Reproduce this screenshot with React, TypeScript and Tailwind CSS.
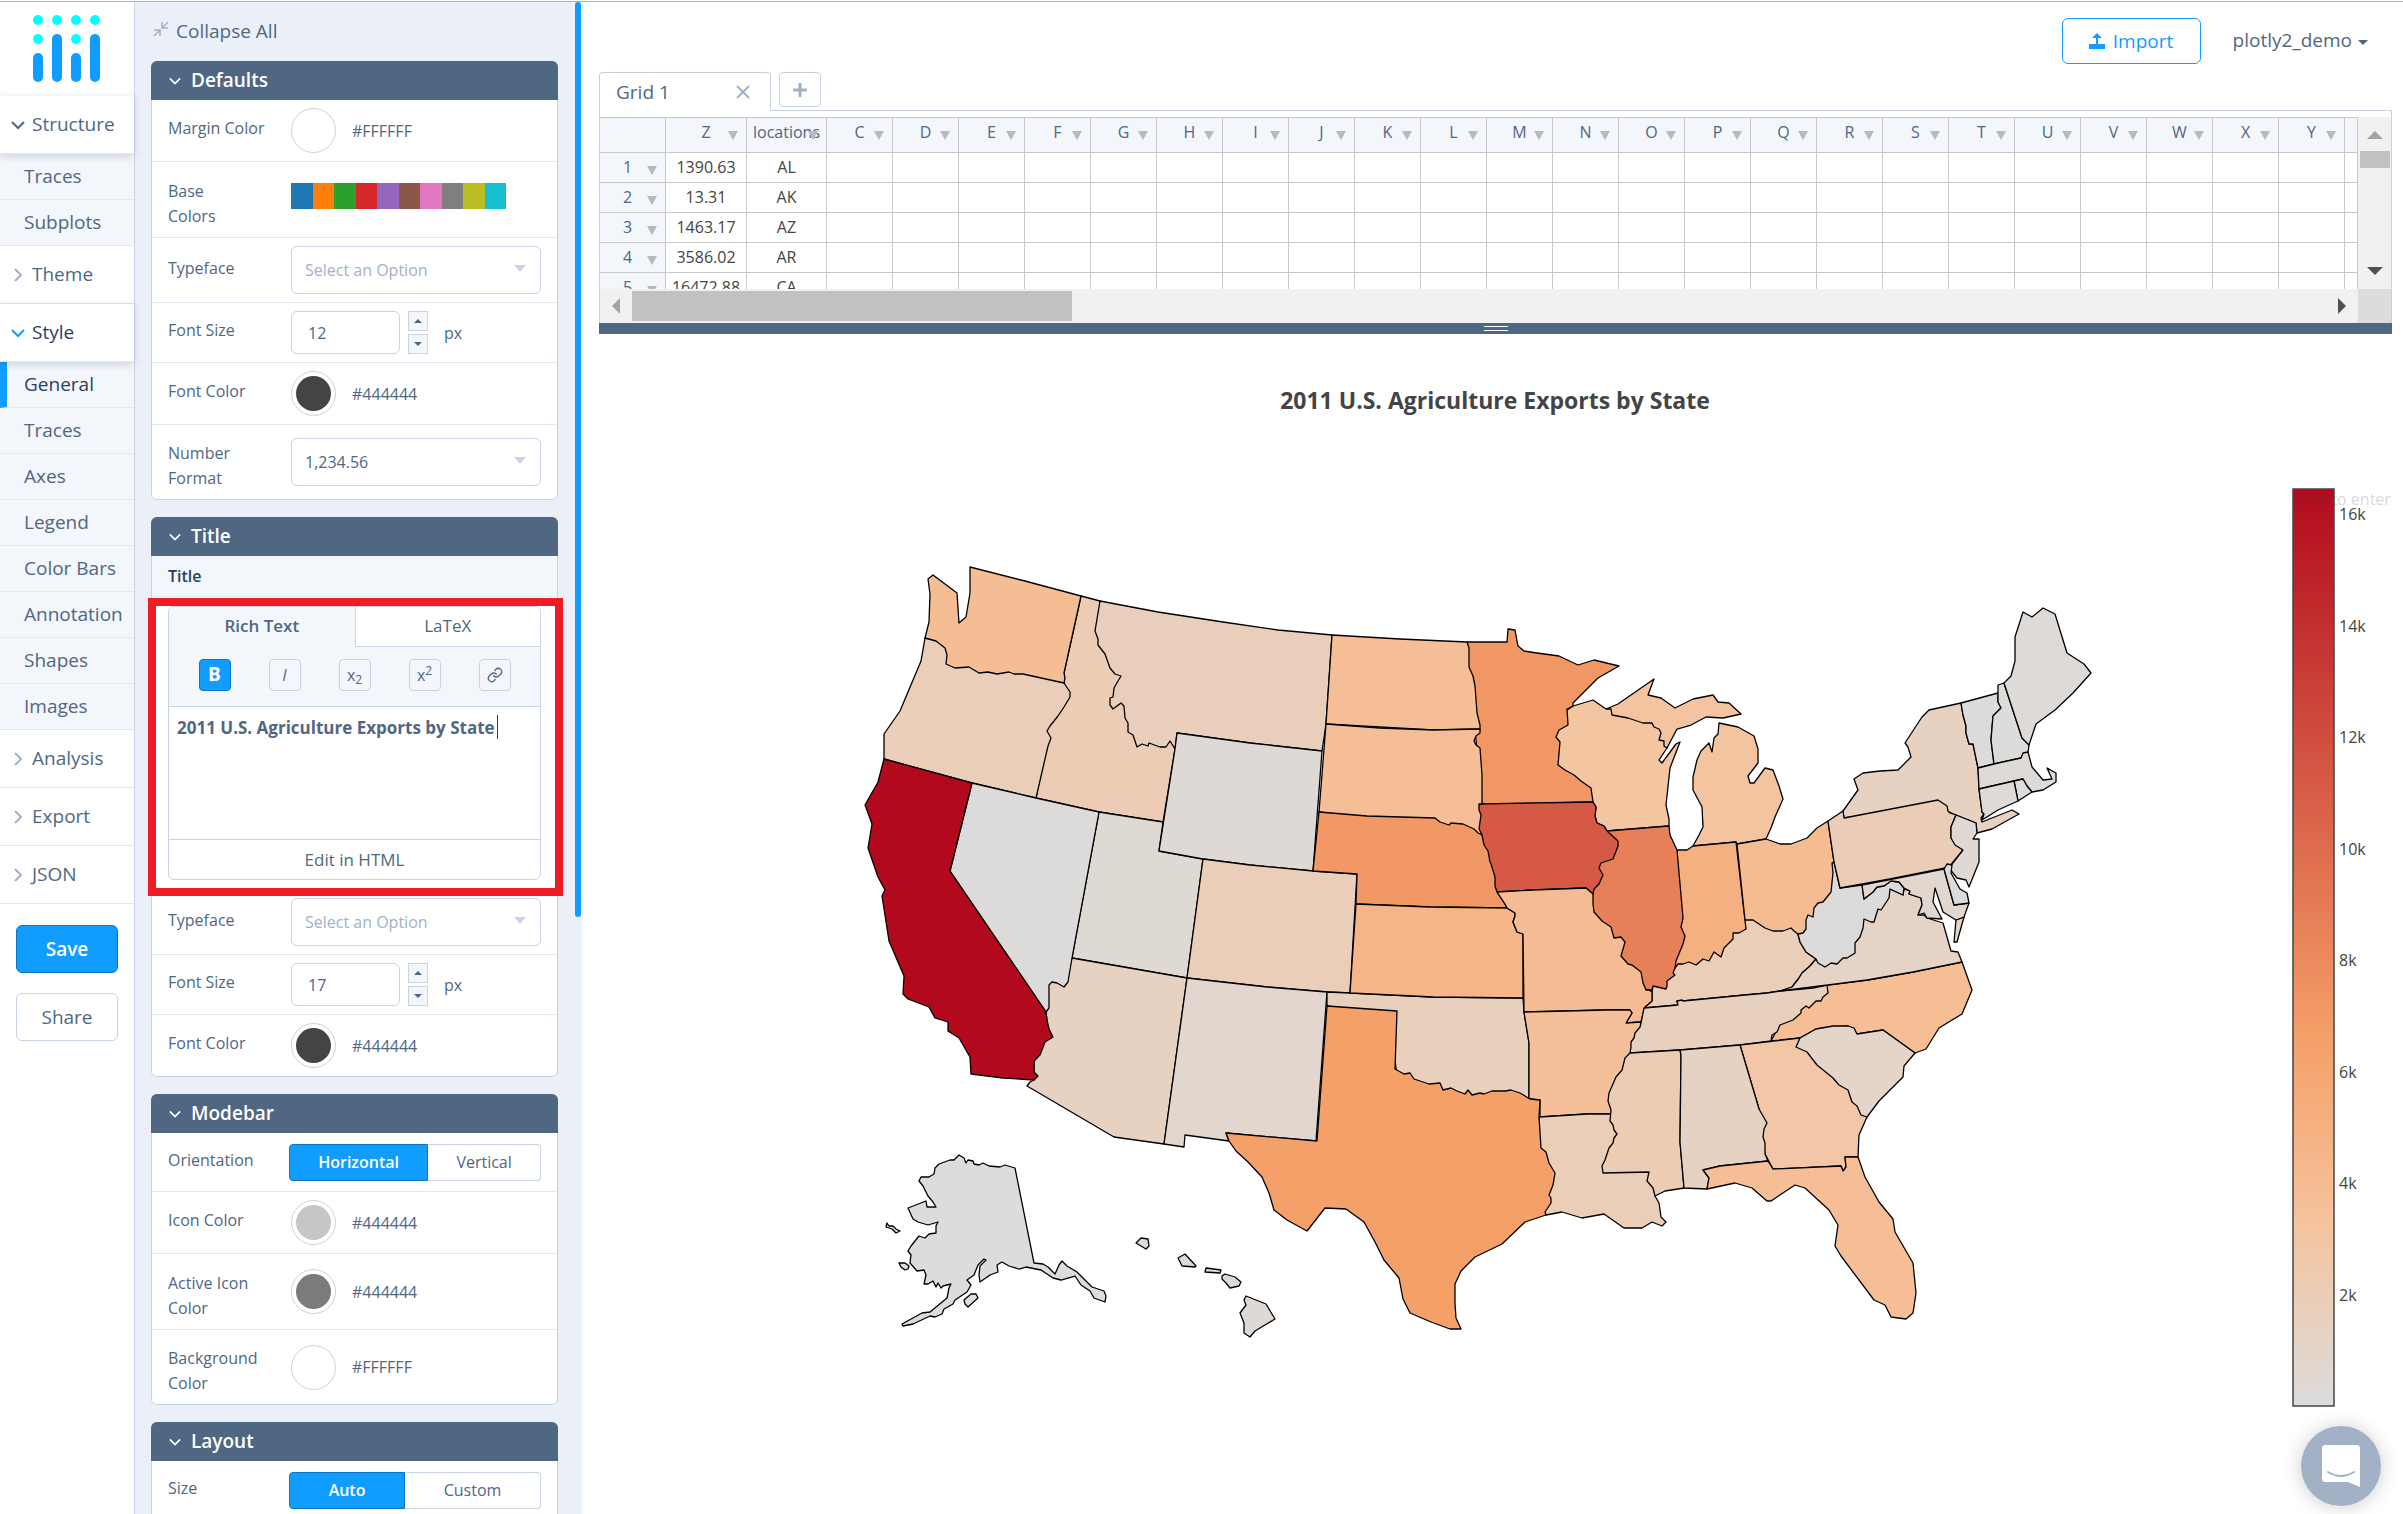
import React, { useState } from 'react';
import { Link as LinkIcon } from 'lucide-react';

type NavSection = { label: string; items?: string[] };

const SECTIONS: NavSection[] = [
  { label: 'Structure', items: ['Traces', 'Subplots'] },
  { label: 'Theme' },
  { label: 'Style', items: ['General', 'Traces', 'Axes', 'Legend', 'Color Bars', 'Annotation', 'Shapes', 'Images'] },
  { label: 'Analysis' },
  { label: 'Export' },
  { label: 'JSON' },
];

const PALETTE = ['#1f77b4', '#ff7f0e', '#2ca02c', '#d62728', '#9467bd', '#8c564b', '#e377c2', '#7f7f7f', '#bcbd22', '#17becf'];

const LETTERS = 'CDEFGHIJKLMNOPQRSTUVWXY'.split('');

const ROWS = [
  ['1390.63', 'AL'],
  ['13.31', 'AK'],
  ['1463.17', 'AZ'],
  ['3586.02', 'AR'],
  ['16472.88', 'CA'],
];

// [stop, r, g, b]
const SCALE = [
  [0, 220, 220, 220],
  [0.2, 245, 195, 157],
  [0.4, 245, 160, 105],
  [1, 178, 10, 28],
];
const Z_MIN = 13.31;
const Z_MAX = 16472.88;

function colorFor(z: number) {
  const t = (z - Z_MIN) / (Z_MAX - Z_MIN);
  let i = 1;
  while (i < SCALE.length - 1 && t > SCALE[i][0]) i++;
  const a = SCALE[i - 1];
  const b = SCALE[i];
  const k = (t - a[0]) / (b[0] - a[0]);
  const [r, g, bl] = [1, 2, 3].map((c) => Math.round(a[c] + (b[c] - a[c]) * k));
  return `rgb(${r},${g},${bl})`;
}

// Painted in order: a state only needs its exact border where nothing later covers it
const STATES: [string, number, string][] = [
  ['MT', 1718, 'M1100 601L1158 612L1223 622L1278 630L1332 635L1326 724L1322 751L1250 743L1177 733L1175 749L1168 760L1135 760L1100 710L1088 645Z'],
  ['ID', 2078.89, 'M1081 596L1100 601L1095 631L1098 639L1098 645L1105 654L1110 668L1115 674L1121 676L1114 688L1113 697L1110 698L1110 705L1113 709L1121 703L1124 706L1125 718L1128 723L1128 732L1133 735L1137 747L1142 744L1148 746L1149 743L1160 747L1166 747L1170 741L1175 749L1163 822L1099 812L1036 798L1046 746L1046 730L1060 690L1064 673Z'],
  ['OR', 1794.57, 'M925 638L921 661L900 711L884 734L884 759L972 783L1036 798L1048 746L1051 738L1047 731L1050 726L1058 716L1064 707L1070 697L1070 692L1064 683L1064 660Z'],
  ['WA', 3894.81, 'M970 567L1025 581L1081 596L1064 673L1065 678L1064 683L1023 674L1014 674L1009 672L997 674L988 672L979 673L969 667L955 668L946 664L947 655L945 648L936 641L925 638L929 622L930 594L928 579L933 575L957 593L959 623L966 617L970 593Z'],
  ['UT', 453.39, 'M1099 812L1163 822L1159 851L1203 859L1187 978L1072 958Z'],
  ['AZ', 1463.17, 'M1072 958L1187 978L1164 1144L1114 1137L1027 1086L1030 1082L1034 1080L1034 1062L1040 1050L1048 1030L1046 1012L1046 980L1068 970Z'],
  ['NV', 139.89, 'M972 783L1036 798L1099 812L1072 958L1068 982L1064 987L1057 983L1052 982L1049 985L1049 1008L1046 1012L950 871Z'],
  ['CA', 16472.88, 'M884 759L972 783L950 871L1046 1012L1047 1020L1049 1029L1053 1037L1045 1042L1040 1055L1034 1061L1034 1072L1038 1076L1034 1080L1003 1078L971 1074L970 1057L959 1038L948 1031L948 1022L935 1018L929 1007L908 999L903 994L904 976L889 941L882 896L885 890L878 877L868 848L872 824L865 805L878 782Z'],
  ['WY', 349.69, 'M1177 733L1250 743L1322 751L1313 871L1250 865L1203 859L1159 851L1175 749Z'],
  ['CO', 1851.33, 'M1203 859L1250 865L1313 871L1357 874L1350 993L1327 992L1267 987L1187 978Z'],
  ['NM', 751.58, 'M1187 978L1267 987L1327 992L1316 1141L1226 1133L1229 1141L1185 1135L1184 1147L1164 1144Z'],
  ['MI', 3164.16, 'M1719 723L1738 727L1754 736L1758 749L1758 763L1748 776L1750 783L1754 783L1765 768L1773 770L1779 786L1783 799L1775 817L1771 828L1766 839L1737 844L1736 842L1693 846L1699 835L1703 827L1702 807L1693 790L1693 777L1697 760L1701 751L1709 743L1712 752L1714 738L1718 734ZM1606 709L1618 704L1654 679L1648 695L1661 698L1675 708L1693 699L1713 695L1718 702L1729 703L1741 714L1723 718L1706 717L1691 725L1677 729L1667 748L1650 740L1630 730L1608 715Z'],
  ['WI', 3090.23, 'M1573 706L1593 700L1606 709L1611 709L1612 715L1628 718L1643 723L1652 723L1654 727L1659 729L1661 733L1659 740L1664 741L1664 746L1667 748L1659 760L1662 763L1676 744L1680 742L1670 768L1666 805L1669 819L1669 826L1607 831L1604 826L1597 823L1595 816L1596 807L1593 802L1580 790L1550 760L1550 735L1560 715Z'],
  ['MN', 7192.33, 'M1467 642L1507 642L1508 629L1515 630L1518 646L1524 651L1537 653L1559 656L1578 665L1594 660L1619 666L1598 678L1573 703L1573 706L1567 709L1568 725L1559 730L1556 737L1560 742L1558 765L1565 770L1574 775L1581 781L1591 788L1593 802L1550 803L1482 804L1476 740L1470 700L1467 660Z'],
  ['KY', 1889.15, 'M1745 915L1795 920L1798 934L1800 942L1806 952L1816 959L1810 966L1802 973L1799 978L1792 987L1780 991L1767 993L1745 995L1683 1001L1677 1001L1678 1005L1644 1008L1652 1001L1652 992L1653 986L1660 975L1680 950L1725 925Z'],
  ['IN', 5050.23, 'M1677 850L1687 850L1693 846L1736 842L1745 920L1746 929L1739 933L1733 933L1733 939L1729 943L1724 948L1721 957L1714 952L1709 961L1703 959L1696 965L1689 962L1683 964L1678 964L1675 968L1674 950L1674 920Z'],
  ['IL', 8709.48, 'M1607 831L1669 826L1670 835L1677 850L1683 918L1681 927L1685 936L1683 944L1676 961L1675 968L1673 973L1675 975L1667 981L1667 986L1666 989L1653 986L1652 990L1646 990L1638 978L1615 950L1590 915L1590 890L1598 870L1600 850Z'],
  ['IA', 11273.76, 'M1479 804L1593 802L1596 807L1595 816L1597 823L1604 826L1607 831L1618 841L1618 846L1613 859L1601 863L1599 868L1603 875L1599 884L1594 889L1593 894L1586 888L1533 890L1497 892L1488 870L1480 850L1475 820Z'],
  ['ND', 3761.96, 'M1332 635L1400 639L1467 642L1469 648L1469 667L1473 676L1475 686L1477 713L1480 725L1480 729L1433 730L1326 724Z'],
  ['SD', 3770.19, 'M1326 724L1380 728L1433 730L1480 729L1480 733L1476 736L1474 741L1476 745L1480 748L1482 775L1482 804L1479 804L1479 810L1481 815L1479 829L1482 835L1450 830L1319 812Z'],
  ['NE', 7114.13, 'M1319 812L1367 816L1435 818L1440 822L1449 825L1451 823L1463 824L1474 829L1478 833L1482 835L1484 845L1488 851L1490 862L1491 864L1495 877L1495 886L1497 892L1505 904L1507 908L1430 907L1356 904L1357 874L1313 871Z'],
  ['OK', 1646.41, 'M1327 992L1350 993L1433 997L1523 998L1524 1012L1529 1043L1529 1098L1500 1110L1400 1100L1390 1020L1327 1006Z'],
  ['KS', 4589.01, 'M1356 904L1430 907L1507 908L1515 913L1515 916L1513 922L1517 932L1523 934L1523 998L1433 997L1350 993Z'],
  ['MO', 3933.42, 'M1497 892L1533 890L1586 888L1593 894L1593 904L1594 912L1602 921L1611 927L1614 938L1621 937L1625 942L1621 956L1628 964L1632 965L1641 972L1643 983L1646 990L1649 990L1652 992L1652 1001L1645 1007L1641 1022L1626 1023L1632 1013L1630 1010L1605 1010L1567 1011L1524 1012L1523 934L1517 932L1513 922L1515 916L1515 913L1507 908L1505 904Z'],
  ['AR', 3586.02, 'M1524 1012L1567 1011L1605 1010L1630 1010L1632 1013L1626 1023L1641 1022L1640 1045L1625 1090L1615 1110L1611 1114L1587 1114L1540 1117L1540 1100L1530 1099L1529 1098L1529 1043Z'],
  ['LA', 1914.23, 'M1539 1117L1587 1114L1611 1114L1620 1130L1615 1165L1652 1165L1655 1196L1659 1203L1661 1217L1666 1222L1662 1226L1652 1222L1642 1228L1624 1228L1604 1214L1582 1218L1562 1212L1546 1215L1535 1190Z'],
  ['TX', 6648.22, 'M1327 1006L1397 1011L1395 1069L1404 1074L1410 1073L1414 1079L1429 1084L1440 1083L1443 1090L1451 1088L1457 1091L1465 1094L1468 1090L1472 1095L1480 1093L1484 1094L1492 1091L1505 1091L1511 1090L1520 1093L1530 1099L1540 1100L1539 1117L1541 1148L1546 1152L1549 1163L1555 1173L1553 1185L1549 1195L1551 1198L1551 1203L1545 1212L1546 1215L1525 1222L1502 1244L1475 1257L1461 1271L1455 1284L1455 1303L1456 1318L1461 1329L1450 1329L1431 1322L1410 1313L1403 1299L1399 1278L1384 1260L1375 1242L1364 1222L1346 1209L1325 1208L1307 1231L1287 1220L1274 1210L1269 1193L1262 1177L1248 1162L1236 1151L1229 1141L1226 1133L1317 1141Z'],
  ['NC', 3806.05, 'M1827 985L1868 980L1913 972L1962 962L1972 990L1962 1014L1939 1028L1926 1049L1915 1053L1883 1030L1857 1034L1848 1026L1816 1029L1800 1038L1771 1041L1785 1015Z'],
  ['TN', 1535.13, 'M1630 1053L1631 1047L1631 1042L1634 1038L1635 1033L1640 1027L1641 1023L1644 1008L1678 1005L1677 1001L1682 1000L1683 1001L1745 995L1767 993L1780 991L1813 988L1827 985L1828 993L1823 997L1821 1001L1816 1001L1809 1008L1806 1006L1801 1010L1801 1013L1793 1020L1780 1025L1777 1032L1772 1035L1771 1041L1740 1045L1680 1050Z'],
  ['MS', 2170.8, 'M1630 1053L1680 1050L1681 1055L1680 1142L1684 1188L1665 1191L1655 1196L1653 1188L1647 1181L1649 1172L1603 1173L1602 1166L1605 1160L1609 1148L1613 1143L1614 1138L1617 1134L1614 1130L1613 1125L1610 1121L1611 1110L1608 1101L1609 1093L1616 1077L1622 1070L1625 1058Z'],
  ['GA', 2860.84, 'M1740 1045L1800 1038L1830 1060L1867 1110L1867 1117L1859 1135L1858 1157L1845 1157L1846 1167L1843 1171L1841 1166L1773 1169L1765 1154L1759 1109Z'],
  ['AL', 1390.63, 'M1680 1050L1740 1045L1759 1109L1767 1123L1764 1129L1763 1137L1765 1143L1765 1154L1768 1161L1720 1166L1703 1170L1709 1178L1707 1189L1684 1188L1680 1142L1681 1055Z'],
  ['FL', 3764.09, 'M1703 1170L1720 1166L1768 1161L1773 1169L1841 1166L1843 1171L1846 1167L1845 1157L1858 1157L1865 1177L1879 1202L1893 1219L1895 1232L1913 1263L1916 1293L1913 1313L1906 1319L1891 1317L1885 1305L1874 1300L1841 1256L1835 1246L1838 1225L1829 1210L1805 1188L1795 1185L1771 1201L1767 1201L1752 1188L1735 1183L1707 1189L1709 1178Z'],
  ['SC', 929.93, 'M1800 1038L1816 1029L1833 1026L1848 1026L1854 1028L1857 1034L1883 1030L1915 1053L1904 1066L1903 1077L1879 1101L1867 1117L1861 1115L1857 1106L1852 1102L1848 1090L1839 1085L1833 1078L1817 1065L1807 1052L1796 1047Z'],
  ['VA', 1146.48, 'M1780 991L1792 987L1799 978L1802 973L1810 966L1816 959L1850 935L1880 895L1890 889L1903 895L1904 889L1910 891L1909 894L1921 898L1922 905L1918 915L1924 915L1927 918L1943 923L1951 951L1958 952L1962 962L1913 972L1867 980L1828 985ZM1956 920L1964 917L1957 942L1954 942Z'],
  ['WV', 138.89, 'M1834 862L1840 888L1862 885L1864 899L1873 892L1877 887L1884 886L1891 881L1899 882L1904 888L1903 895L1890 889L1889 898L1881 910L1878 909L1874 922L1871 922L1864 919L1863 928L1860 937L1855 943L1855 953L1847 958L1843 958L1837 964L1831 963L1825 967L1818 963L1816 959L1806 952L1800 942L1798 934L1800 925L1822 895L1832 863Z'],
  ['OH', 3979.79, 'M1737 844L1766 839L1780 844L1791 844L1807 838L1817 828L1828 821L1834 862L1832 863L1833 873L1831 892L1823 902L1818 903L1814 908L1813 917L1808 915L1806 920L1806 929L1803 933L1798 934L1794 931L1791 928L1783 931L1773 931L1765 928L1753 920L1745 920Z'],
  ['NY', 1488.9, 'M1843 811L1858 790L1854 779L1863 773L1880 771L1898 770L1911 757L1908 747L1905 743L1922 717L1929 710L1961 703L1963 715L1966 726L1966 733L1969 744L1973 744L1978 768L1979 789L1982 812L1984 814L1981 818L1982 822L2012 810L2019 814L1992 829L1977 833L1976 823L1956 815L1940 808L1844 818Z'],
  ['PA', 1969.87, 'M1828 821L1843 811L1844 818L1938 800L1947 806L1948 811L1950 813L1956 815L1951 827L1951 838L1963 850L1949 867L1945 868L1890 879L1840 888L1834 862Z'],
  ['NJ', 500.4, 'M1956 815L1976 823L1977 833L1973 839L1979 839L1979 862L1969 887L1966 880L1957 878L1949 868L1963 850L1955 845L1951 838L1951 827Z'],
  ['MD', 692.75, 'M1862 885L1944 869L1954 905L1969 903L1964 917L1956 920L1943 912L1935 888L1933 902L1942 919L1927 918L1924 913L1918 915L1922 905L1921 898L1909 894L1910 891L1904 888L1899 882L1891 881L1884 886L1877 887L1873 892L1864 899Z'],
  ['DE', 282.19, 'M1944 869L1947 864L1952 865L1951 873L1960 889L1967 893L1969 903L1954 905Z'],
  ['VT', 180.14, 'M1961 703L1998 693L1998 702L2001 708L1993 716L1991 740L1994 764L1978 768L1973 744L1969 744L1966 733L1966 726L1963 715Z'],
  ['NH', 73.06, 'M1998 693L1998 685L2004 683L2022 738L2029 745L2028 752L2021 758L1994 764L1991 740L1993 716L2001 708L1998 702Z'],
  ['ME', 278.37, 'M2004 683L2011 676L2015 661L2015 637L2023 612L2032 617L2043 608L2055 614L2067 653L2084 664L2091 673L2073 693L2055 710L2036 724L2029 745L2022 738Z'],
  ['MA', 248.65, 'M1978 768L1994 764L2021 758L2023 753L2028 752L2032 767L2043 780L2052 779L2047 768L2056 773L2056 782L2043 790L2032 792L2027 786L2023 779L1979 789Z'],
  ['RI', 31.59, 'M2014 781L2023 779L2027 786L2032 792L2018 801Z'],
  ['CT', 259.62, 'M1979 789L2014 781L2018 801L1998 810L1982 820L1984 814L1982 812Z'],
  ['AK', 13.31, 'M959 1155L964 1158L966 1163L968 1160L973 1161L974 1164L979 1165L983 1163L989 1166L1000 1167L1005 1165L1015 1168L1034 1263L1043 1264L1048 1267L1055 1274L1059 1265L1062 1261L1067 1266L1077 1272L1092 1287L1104 1291L1106 1296L1105 1302L1094 1298L1090 1291L1081 1285L1075 1276L1061 1280L1053 1278L1041 1270L1026 1267L1019 1269L1009 1266L1002 1262L997 1265L998 1272L990 1275L980 1282L979 1275L980 1266L986 1260L984 1259L978 1265L974 1275L967 1280L971 1285L967 1292L955 1300L953 1304L944 1309L942 1314L935 1317L930 1316L913 1324L903 1326L902 1324L922 1313L930 1312L947 1298L949 1288L951 1284L943 1286L941 1288L938 1283L936 1287L933 1281L928 1284L924 1284L926 1275L924 1270L917 1271L910 1263L911 1255L908 1251L911 1246L919 1236L925 1238L929 1234L936 1233L936 1226L938 1222L928 1225L918 1222L913 1219L908 1208L926 1201L927 1207L936 1207L933 1202L928 1196L923 1186L919 1181L921 1177L929 1177L934 1174L935 1168L939 1164L950 1160L954 1160ZM887 1223L889 1226L893 1226L896 1229L900 1231L896 1233L892 1229L886 1227ZM899 1263L905 1263L909 1266L908 1269L905 1270L901 1267ZM964 1300L971 1294L976 1294L978 1298L968 1307L965 1304Z'],
  ['HI', 401.84, 'M1136 1243L1141 1238L1148 1239L1149 1246L1146 1249ZM1178 1258L1185 1254L1196 1266L1195 1267L1182 1266ZM1206 1268L1221 1270L1220 1273L1205 1272ZM1222 1276L1225 1274L1235 1277L1241 1282L1239 1286L1230 1288L1226 1283L1222 1279ZM1246 1296L1266 1304L1275 1319L1255 1331L1250 1337L1244 1333L1244 1323L1240 1313L1246 1305L1244 1300Z'],
];

function Chevron({ open, className }: { open: boolean; className: string }) {
  return (
    <svg className={className} width="14" height="14" viewBox="0 0 14 14" fill="none" stroke="currentColor" strokeWidth="2">
      <path d={open ? 'M1 4l6 6 6-6' : 'M4 1l6 6-6 6'} />
    </svg>
  );
}

function Logo() {
  return (
    <svg className="mx-auto" width="68" height="68" viewBox="0 0 68 68">
      <g fill="#0ff">
        {[5, 24, 43, 62].map((x) => <circle key={x} cx={x} cy="5" r="5" />)}
        <circle cx="5" cy="24" r="5" />
        <circle cx="43" cy="24" r="5" />
      </g>
      <g fill="#119dff">
        <rect x="0" y="38" width="10" height="29" rx="5" />
        <rect x="19" y="19" width="10" height="48" rx="5" />
        <rect x="38" y="38" width="10" height="29" rx="5" />
        <rect x="57" y="19" width="10" height="48" rx="5" />
      </g>
    </svg>
  );
}

function SideNav() {
  const [active, setActive] = useState('Style/General');
  return (
    <nav className="w-[135px] shrink-0 border-r border-[#c8d4e3] bg-white text-[19px]">
      <div className="h-[94px] pt-[13px]">
        <Logo />
      </div>
      {SECTIONS.map((s) => (
        <div key={s.label}>
          <button
            className={
              'relative flex h-[58px] w-full items-center gap-[7px] border-b border-[#dfe8f3] pl-[11px] ' +
              (s.items ? 'shadow-[0_2px_8px_rgba(42,63,95,0.2)] ' : '') +
              (s.label === 'Style' ? 'font-medium text-[#2a3f5f]' : '')
            }
          >
            <Chevron
              open={!!s.items}
              className={s.label === 'Style' ? 'text-[#119dff]' : s.items ? 'text-[#506784]' : 'text-[#a2b1c6]'}
            />
            {s.label}
          </button>
          {s.items?.map((item) => {
            const id = s.label + '/' + item;
            return (
              <a
                key={id}
                href="#"
                onClick={() => setActive(id)}
                className={
                  'flex h-[46px] items-center whitespace-nowrap border-b border-[#dfe8f3] bg-[#f3f6fa] ' +
                  (active === id ? 'border-l-[7px] border-l-[#119dff] pl-[17px] font-medium text-[#2a3f5f]' : 'pl-6')
                }
              >
                {item}
              </a>
            );
          })}
        </div>
      ))}
      <div className="flex flex-col gap-5 px-4 pt-[21px] font-medium">
        <button className="h-12 rounded-md border border-[#0d76bf] bg-[#119dff] font-semibold text-white">Save</button>
        <button className="h-12 rounded-md border border-[#c8d4e3] bg-white">Share</button>
      </div>
    </nav>
  );
}

function Card({ title, children }: { title: string; children: React.ReactNode }) {
  return (
    <section className="mb-[17px] rounded-md border border-[#c8d4e3] bg-white">
      <h2 className="-mx-px -mt-px flex h-[39px] items-center gap-2.5 rounded-t-md bg-[#506784] pl-[18px] text-[19px] font-semibold text-white">
        <Chevron open className="w-3" />
        {title}
      </h2>
      {children}
    </section>
  );
}

function Row({ label, id, two, children }: { label: string; id?: string; two?: boolean; children: React.ReactNode }) {
  return (
    <div
      className={
        'flex items-center border-b border-[#dfe8f3] pl-4 pr-4 last:border-b-0 ' +
        (two ? 'min-h-[76px] last:min-h-[74px]' : 'py-2')
      }
    >
      <label htmlFor={id} className={'w-[123px] leading-[25px] ' + (two ? 'pr-10 pt-2' : 'whitespace-nowrap pb-1')}>
        {label}
      </label>
      {children}
    </div>
  );
}

function ColorField({ id, color, hex }: { id: string; color: string; hex: string }) {
  return (
    <>
      <button id={id} className="size-[45px] rounded-full border border-[#c8d4e3] p-1">
        <span className="block size-full rounded-full" style={{ backgroundColor: color }} />
      </button>
      <span className="ml-4 font-medium">{hex}</span>
    </>
  );
}

function SelectField({ id, value, muted }: { id: string; value: string; muted?: boolean }) {
  return (
    <div className="relative flex-1">
      <select
        id={id}
        className={
          'h-12 w-full appearance-none rounded-md border border-[#c8d4e3] bg-white pl-[13px] pr-8 ' +
          (muted ? 'text-[#a2b1c6]' : '')
        }
      >
        <option>{value}</option>
      </select>
      <span className="pointer-events-none absolute right-[15px] top-[19px] border-x-[6px] border-t-[7px] border-x-transparent border-t-[#c8d4e3]" />
    </div>
  );
}

function SizeField({ id, value }: { id: string; value: string }) {
  return (
    <>
      <input id={id} defaultValue={value} className="h-[43px] w-[109px] rounded-md border border-[#c8d4e3] pl-4" />
      <div className="ml-2 flex flex-col gap-[3px]">
        <button aria-label="Increase" className="flex h-[20px] w-5 items-center justify-center border border-[#c8d4e3] bg-[#f3f6fa]">
          <span className="border-x-4 border-b-4 border-x-transparent border-b-[#506784]" />
        </button>
        <button aria-label="Decrease" className="flex h-[20px] w-5 items-center justify-center border border-[#c8d4e3] bg-[#f3f6fa]">
          <span className="border-x-4 border-t-4 border-x-transparent border-t-[#506784]" />
        </button>
      </div>
      <span className="ml-4">px</span>
    </>
  );
}

function Segmented({ options }: { options: string[] }) {
  const [value, setValue] = useState(options[0]);
  return (
    <div className="-ml-0.5 flex h-[37px] flex-1">
      {options.map((o) => (
        <button
          key={o}
          onClick={() => setValue(o)}
          className={
            'grow border px-6 first:rounded-l last:rounded-r ' +
            (o === value ? 'border-[#0d76bf] bg-[#119dff] font-semibold text-white' : 'border-l-0 border-[#c8d4e3] bg-white')
          }
        >
          {o}
        </button>
      ))}
    </div>
  );
}

function RichText() {
  const tool = 'flex size-8 items-center justify-center rounded border border-[#c8d4e3] text-base';
  return (
    <div className="relative px-4 pb-2.5 pt-[9px] text-[17px]">
      <div className="overflow-hidden rounded-md border border-[#c8d4e3]">
        <div className="grid h-10 grid-cols-2 bg-[#f3f6fa]">
          <button className="pb-0.5 font-semibold">Rich Text</button>
          <button className="border-b border-l border-[#c8d4e3] bg-white pb-0.5">LaTeX</button>
        </div>
        <div className="flex h-[60px] items-center justify-center gap-[38px] border-b border-[#c8d4e3] bg-[#f3f6fa] pb-1">
          <button className="flex size-8 items-center justify-center rounded border border-[#0d76bf] bg-[#119dff] text-[19px] font-bold text-white">B</button>
          <button className={tool + ' italic'}>I</button>
          <button className={tool}><span>x<sub>2</sub></span></button>
          <button className={tool}><span>x<sup>2</sup></span></button>
          <button className={tool} aria-label="Link"><LinkIcon className="size-4" /></button>
        </div>
        <div className="relative">
          <textarea
            aria-label="Title text"
            defaultValue="2011 U.S. Agriculture Exports by State"
            className="block h-[132px] w-full resize-none whitespace-nowrap overflow-hidden pl-2 pt-2 font-bold outline-none"
          />
          <span className="absolute left-[328px] top-2 h-6 w-px bg-[#2a3f5f]" />
        </div>
        <button className="h-10 w-full border-t border-[#c8d4e3]">Edit in HTML</button>
      </div>
      <div className="pointer-events-none absolute -bottom-1.5 -left-1 -right-1.5 top-px z-10 border-8 border-[#ee1c24]" />
    </div>
  );
}

function StylePanel() {
  return (
    <aside className="flex w-[448px] shrink-0 justify-between overflow-hidden border-r-2 border-[#f3f6fa] bg-[#ebf0f8]">
      <div className="ml-4 w-[407px]">
        <button className="flex h-[59px] items-center gap-[7px] text-[19px]">
          <svg className="mb-1.5 ml-0.5" width="16" height="16" viewBox="0 0 16 16" fill="none" stroke="#a2b1c6" strokeWidth="1.5">
            <path d="M1 9h6v6M7 9l-6 6M9 1v6h6M9 7l6-6" />
          </svg>
          Collapse All
        </button>
        <Card title="Defaults">
          <Row label="Margin Color" id="margin"><ColorField id="margin" color="#ffffff" hex="#FFFFFF" /></Row>
          <Row label="Base Colors" two>
            <div className="mb-2 flex h-[26px] w-[215px]">
              {PALETTE.map((c) => <span key={c} className="flex-1" style={{ backgroundColor: c }} />)}
            </div>
          </Row>
          <Row label="Typeface" id="face"><SelectField id="face" value="Select an Option" muted /></Row>
          <Row label="Font Size" id="size"><SizeField id="size" value="12" /></Row>
          <Row label="Font Color" id="color"><ColorField id="color" color="#444444" hex="#444444" /></Row>
          <Row label="Number Format" id="format" two><SelectField id="format" value="1,234.56" /></Row>
        </Card>
        <Card title="Title">
          <h3 className="flex h-[41px] items-center border-b border-[#dfe8f3] bg-[#f3f6fa] pl-4 font-semibold text-[#2a3f5f]">Title</h3>
          <RichText />
          <Row label="Typeface" id="tface"><SelectField id="tface" value="Select an Option" muted /></Row>
          <Row label="Font Size" id="tsize"><SizeField id="tsize" value="17" /></Row>
          <Row label="Font Color" id="tcolor"><ColorField id="tcolor" color="#444444" hex="#444444" /></Row>
        </Card>
        <Card title="Modebar">
          <div className="[&>div]:min-h-[58px]">
            <Row label="Orientation"><Segmented options={['Horizontal', 'Vertical']} /></Row>
          </div>
          <div className="border-t border-[#dfe8f3]">
            <Row label="Icon Color" id="icon"><ColorField id="icon" color="#c6c6c6" hex="#444444" /></Row>
            <Row label="Active Icon Color" id="aicon" two><ColorField id="aicon" color="#7b7b7b" hex="#444444" /></Row>
            <Row label="Background Color" id="bg" two><ColorField id="bg" color="#ffffff" hex="#FFFFFF" /></Row>
          </div>
        </Card>
        <Card title="Layout">
          <div className="[&>div]:min-h-[58px]">
            <Row label="Size"><Segmented options={['Auto', 'Custom']} /></Row>
          </div>
        </Card>
      </div>
      <div className="h-[60.5%] w-1.5 rounded-full bg-[#119dff]" />
    </aside>
  );
}

function Caret() {
  return <span className="absolute right-2 top-[13px] border-x-[5px] border-t-[9px] border-x-transparent border-t-[#b9b9b9]" />;
}

function DataGrid() {
  const head = 'relative h-[35px] border-b border-r border-[#c8c8c8] bg-[#f3f6fa] pb-1.5 text-center font-normal text-[#506784]';
  const cell = 'h-[30px] border-b border-r border-[#c8c8c8] pb-0.5 text-center text-[#444]';
  return (
    <div className="border-x border-[#c8d0e0] pt-1.5">
      <div className="flex">
        <div className="h-[172px] min-w-0 flex-1 overflow-hidden border-t border-[#c8c8c8]">
          <table className="w-full table-fixed border-separate border-spacing-0">
            <colgroup>
              <col className="w-[66px]" />
              <col className="w-[81px]" />
              <col className="w-[80px]" />
              {LETTERS.map((l) => <col key={l} className="w-[66px]" />)}
              <col />
            </colgroup>
            <thead>
              <tr>
                <th className={head} />
                <th className={head}>Z<Caret /></th>
                <th className={head}>locations<Caret /></th>
                {LETTERS.map((l) => <th key={l} className={head}>{l}<Caret /></th>)}
                <th className={head} />
              </tr>
            </thead>
            <tbody>
              {ROWS.map(([z, loc], i) => (
                <tr key={loc}>
                  <th className="relative border-b border-r border-[#c8c8c8] bg-[#f3f6fa] pb-0.5 pr-2.5 text-center font-normal text-[#506784]">
                    {i + 1}
                    <Caret />
                  </th>
                  <td className={cell}>{z}</td>
                  <td className={cell}>{loc}</td>
                  {LETTERS.map((l) => <td key={l} className={cell} />)}
                  <td className={cell} />
                </tr>
              ))}
            </tbody>
          </table>
        </div>
        <div className="flex w-[33px] flex-col items-center bg-[#f1f1f1]">
          <span className="mb-3 mt-3.5 border-x-8 border-b-8 border-x-transparent border-b-[#a3a3a3]" />
          <span className="h-[17px] w-[30px] bg-[#c1c1c1]" />
          <span className="mb-[14px] mt-auto border-x-8 border-t-8 border-x-transparent border-t-[#505050]" />
        </div>
      </div>
      <div className="flex h-[34px] items-center bg-[#f1f1f1]">
        <span className="mx-3 border-y-8 border-r-8 border-y-transparent border-r-[#a3a3a3]" />
        <span className="h-[30px] w-[440px] bg-[#c1c1c1]" />
        <span className="ml-auto mr-3 border-y-8 border-l-8 border-y-transparent border-l-[#505050]" />
        <span className="h-full w-[33px] bg-[#dcdcdc]" />
      </div>
    </div>
  );
}

function Choropleth() {
  const ticks = [16, 14, 12, 10, 8, 6, 4, 2];
  return (
    <svg className="w-full" viewBox="599 334 1793 1180">
      <defs>
        <linearGradient id="reds" x1="0" y1="1" x2="0" y2="0">
          {SCALE.map(([s, r, g, b]) => <stop key={s} offset={s} stopColor={`rgb(${r},${g},${b})`} />)}
        </linearGradient>
      </defs>
      <text x="1495" y="409" textAnchor="middle" className="fill-[#444] text-[23px] font-bold">
        2011 U.S. Agriculture Exports by State
      </text>
      <g stroke="#000" strokeWidth="1.3" strokeLinejoin="round">
        {STATES.map(([code, z, d]) => <path key={code} d={d} fill={colorFor(z)} />)}
      </g>
      <rect x="2293" y="489" width="41" height="917" fill="url(#reds)" stroke="#444" strokeWidth="1.5" />
      <text x="2293" y="505" className="fill-[#444] text-[16px] opacity-20">Click to enter</text>
      {ticks.map((t, i) => (
        <text key={t} x="2339" y={520 + i * 111.5} className="fill-[#444] text-[16px]">{t}k</text>
      ))}
    </svg>
  );
}

function Workspace() {
  return (
    <main className="min-w-0 flex-1 pl-4 pr-[11px]">
      <header className="flex h-[70px] items-start justify-end pr-6 pt-4">
        <button className="flex h-[46px] w-[139px] items-center justify-center gap-2 rounded-md border border-[#119dff] text-[19px] text-[#119dff]">
          <svg width="16" height="16" viewBox="0 0 16 16" fill="currentColor">
            <path d="M8 0l5 5H9v6H7V5H3zM0 11h16v5H0z" />
          </svg>
          Import
        </button>
        <button className="ml-8 flex h-[44px] items-center gap-1.5 text-[19px]">
          plotly2_demo
          <span className="mt-1 border-x-[5px] border-t-[5px] border-x-transparent border-t-[#506784]" />
        </button>
      </header>
      <div className="flex h-[39px]">
        <div className="flex w-[172px] items-center justify-between rounded-t border border-b-0 border-[#c8d0e0] pl-4 pr-5 text-[19px]">
          Grid 1
          <button aria-label="Close grid">
            <svg width="14" height="14" viewBox="0 0 14 14" stroke="#a2b1c6" strokeWidth="2">
              <path d="M1 1l12 12M13 1L1 13" />
            </svg>
          </button>
        </div>
        <div className="flex-1 border-b border-[#c8d0e0] pl-2">
          <button aria-label="Add grid" className="flex h-[35px] w-[42px] items-center justify-center rounded border border-[#c8d0e0]">
            <svg width="14" height="14" viewBox="0 0 14 14" stroke="#a2b1c6" strokeWidth="3">
              <path d="M7 0v14M0 7h14" />
            </svg>
          </button>
        </div>
      </div>
      <DataGrid />
      <div className="flex h-[11px] flex-col items-center justify-center gap-[3px] bg-[#506784]">
        <span className="h-px w-6 bg-white" />
        <span className="h-px w-6 bg-white" />
      </div>
      <Choropleth />
    </main>
  );
}

export default function App() {
  return (
    <div className="relative h-screen overflow-hidden bg-white pt-px font-['Open_Sans',sans-serif] text-base text-[#506784]">
      <div className="flex h-full border-t border-[#b3b3b3]">
        <SideNav />
        <StylePanel />
        <Workspace />
      </div>
      <button
        aria-label="Open chat"
        className="absolute bottom-2 right-[22px] flex size-20 items-center justify-center rounded-full bg-[#a2b1c6] shadow-[0_1px_20px_rgba(0,0,0,0.2)]"
      >
        <svg width="40" height="42" viewBox="0 0 40 42">
          <path d="M4 0h32q3 0 3 4v38l-12-5H4q-3 0-3-4V4q0-4 3-4z" fill="#fff" />
          <path d="M7 27q13 8 26 0" fill="none" stroke="#a2b1c6" strokeWidth="2" strokeLinecap="round" />
        </svg>
      </button>
    </div>
  );
}
